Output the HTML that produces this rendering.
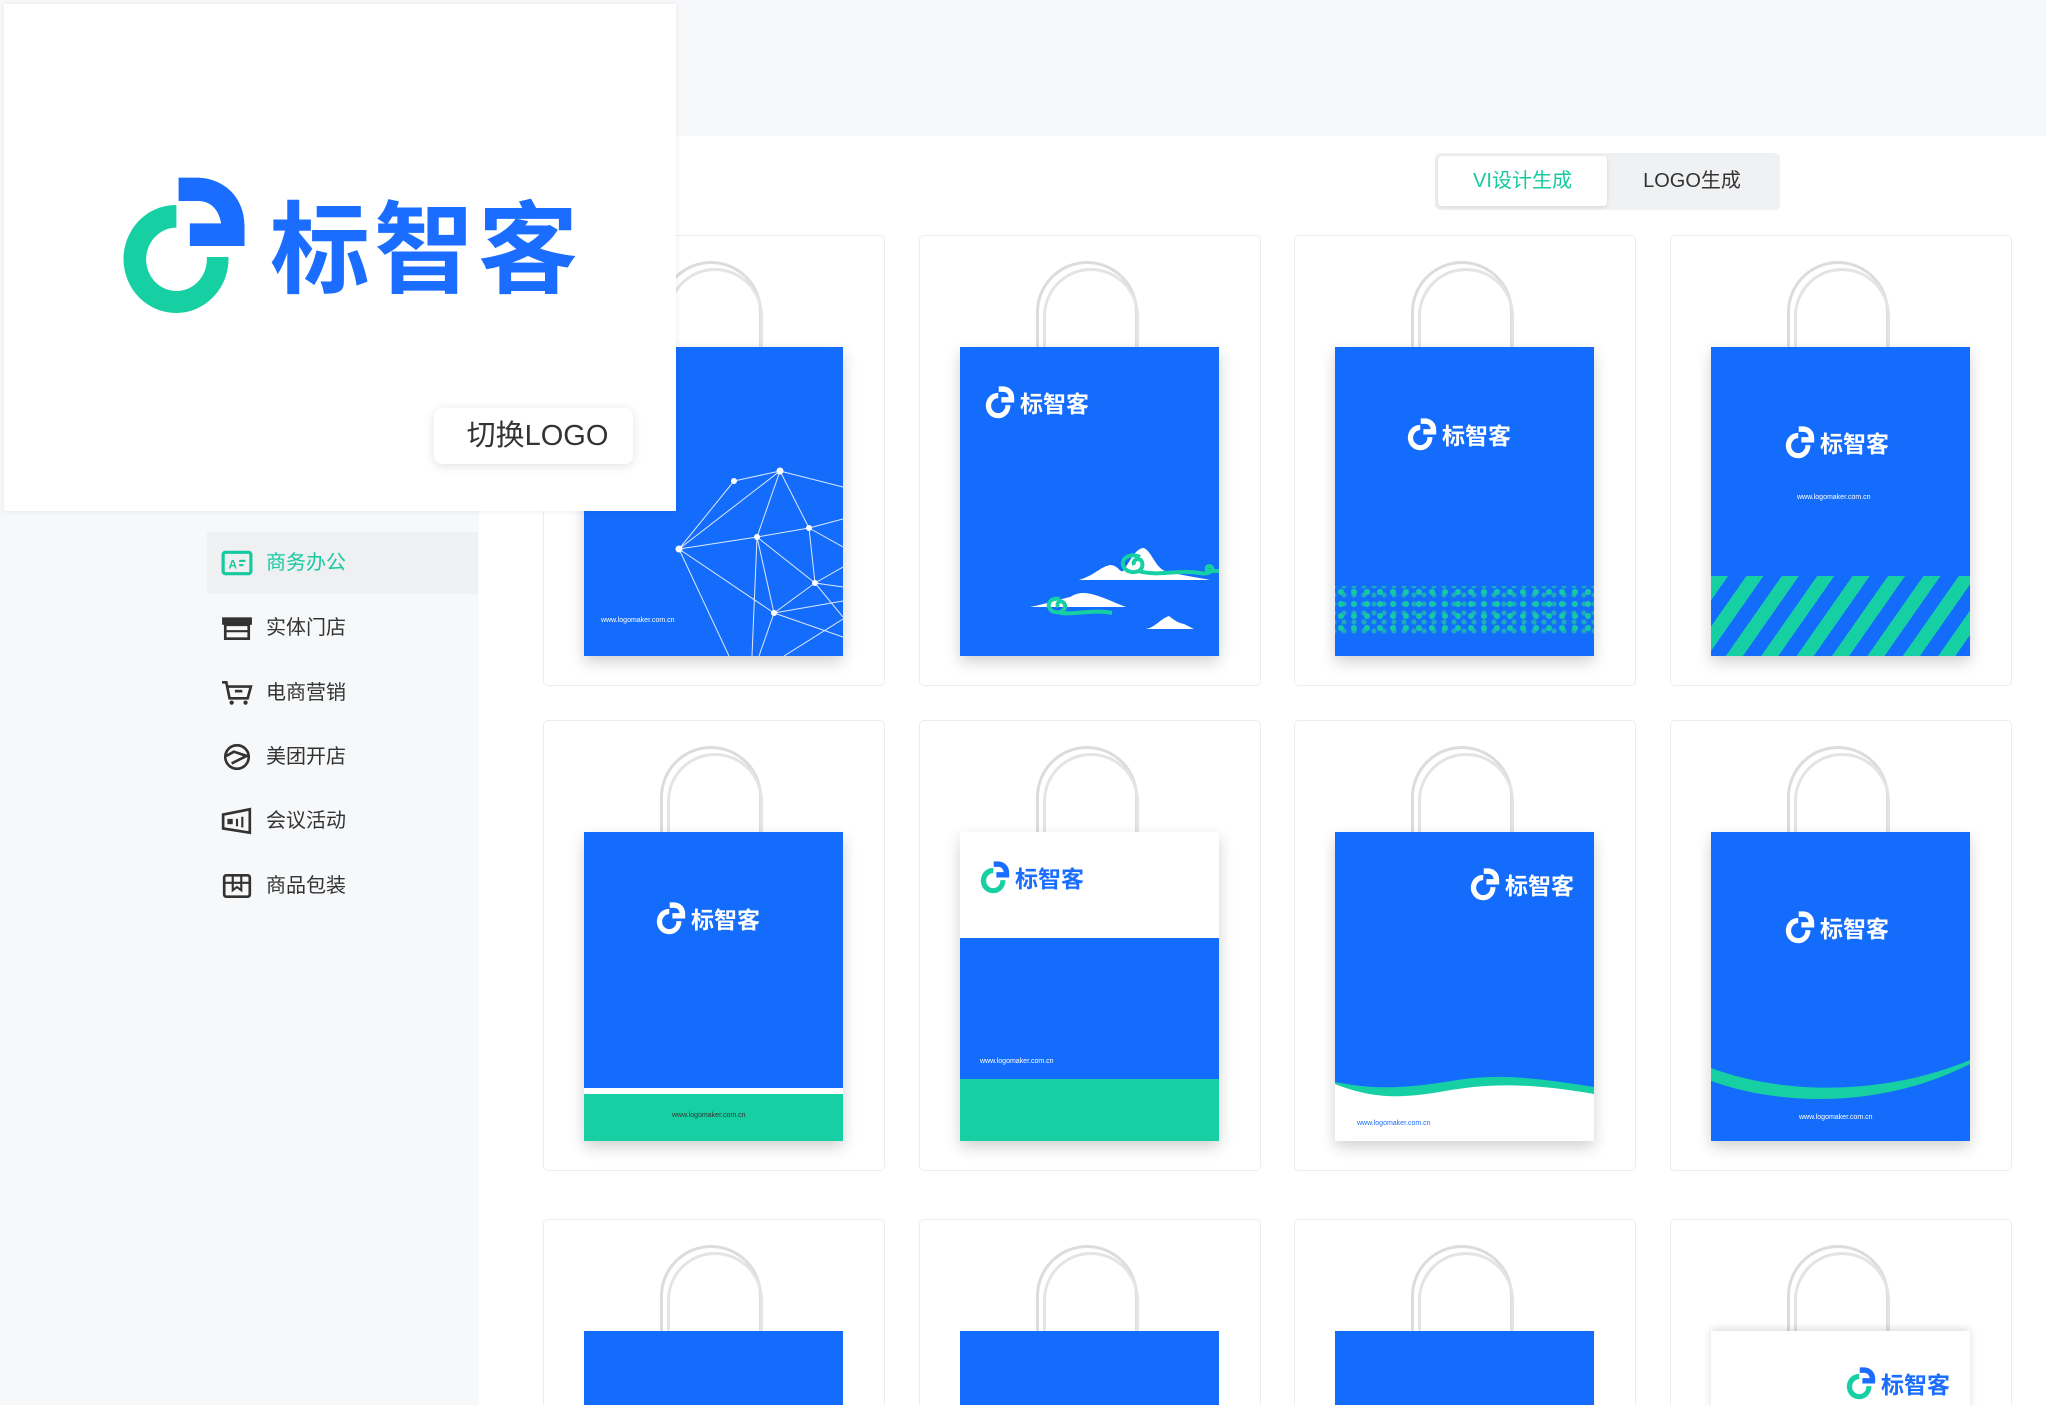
<!DOCTYPE html>
<html><head><meta charset="utf-8">
<style>
*{margin:0;padding:0;box-sizing:border-box}
html,body{width:2046px;height:1405px;overflow:hidden}
body{position:relative;background:#fff;font-family:"Liberation Sans","Noto Sans CJK SC",sans-serif}
.top{position:absolute;left:0;top:0;width:2046px;height:136px;background:#f7f8fa}
.side{position:absolute;left:0;top:136px;width:479px;height:1269px;background:#f7f8fa}
.logocard{position:absolute;left:4px;top:4px;width:672px;height:507px;background:#fff;box-shadow:0 0 6px rgba(0,0,0,.08);z-index:5}
.bigmark{position:absolute;left:116px;top:172px;width:128px;height:140px}
.bigtxt{position:absolute;left:266px;top:178px;font-size:100px;font-weight:bold;color:#1a6dff;letter-spacing:4px;line-height:120px;font-family:"Noto Sans CJK SC",sans-serif}
.switch{position:absolute;left:430px;top:404px;width:199px;height:56px;background:#fff;border-radius:8px;box-shadow:0 2px 10px rgba(0,0,0,.12);font-size:29px;color:#333;line-height:56px;text-align:center;padding-left:8px}
.item{position:absolute;left:207px;width:271px;height:62px;font-size:20px;color:#333;line-height:62px}
.item.act{background:#eff0f2;color:#16c9a0}
.item svg{position:absolute;left:14px;top:17px;width:32px;height:28px}
.item span{position:absolute;left:59px;top:0}
.tabs{position:absolute;left:1435px;top:153px;width:345px;height:57px;background:#f0f1f3;border-radius:5px}
.tab1{position:absolute;left:3px;top:3px;width:169px;height:50px;background:#fff;border-radius:4px;box-shadow:0 1px 4px rgba(0,0,0,.12);color:#16c9a0;font-size:20px;line-height:50px;text-align:center}
.tab2{position:absolute;left:172px;top:3px;width:170px;height:50px;color:#333;font-size:20px;line-height:50px;text-align:center}
.card{position:absolute;width:342px;height:451px;border:1px solid #ebedf0;border-radius:5px;background:#fff;overflow:hidden}
.card.r3{height:186px;border-bottom:none;border-radius:5px 5px 0 0}
.card.r3 .bag{height:75px;box-shadow:none}
.card.r3 .bag.wh{box-shadow:0 -2px 8px rgba(0,0,0,.14);height:80px}
.h1,.h2{position:absolute;border:3px solid #dcdcdc;border-bottom:none;border-radius:52px 52px 0 0}
.h1{left:116px;top:25px;width:102px;height:90px}
.h2{left:123px;top:32px;width:96px;height:83px;border-color:#e4e4e4}
.bag{position:absolute;left:40px;top:111px;width:259px;height:309px;background:#146cfc;box-shadow:0 6px 14px rgba(0,0,0,.18);overflow:hidden}
.lg{position:absolute;display:flex;align-items:center;height:34px;color:#fff;font-weight:bold;font-size:23px;font-family:"Noto Sans CJK SC",sans-serif;white-space:nowrap}
.lg svg{width:30px;height:33px;margin-right:5px}
.url{position:absolute;font-size:7px;color:#fff;white-space:nowrap}
</style></head><body>
<svg width="0" height="0" style="position:absolute">
<defs>
<symbol id="mk" viewBox="260 520 295 420" preserveAspectRatio="none">
<path fill="var(--g,#16cfa3)" d="M390 607 A121 162 0 1 0 510 763 L460 763 A70 95 0 1 1 390 675 Z"/>
<path fill="var(--b,#1a6dff)" d="M395 525 L435 525 C500 525 547 585 547 670 L547 730 L421 730 L421 662 L493 662 C488 620 468 595 440 595 L395 595 Z"/>
</symbol>
</defs>
</svg>

<div class="top"></div>
<div class="side"></div>

<div class="logocard">
<svg class="bigmark" preserveAspectRatio="none"><use href="#mk" width="128" height="140"/></svg>
<div class="bigtxt">标智客</div>
<div class="switch">切换LOGO</div>
</div>

<div class="item act" style="top:532px"><svg viewBox="0 0 30 26"><rect x="2" y="3" width="26" height="20" rx="2" fill="none" stroke="#16c9a0" stroke-width="3"/><text x="7" y="18" font-size="11" font-weight="bold" fill="#16c9a0" font-family="Liberation Sans">A</text><rect x="17" y="10" width="6" height="2" fill="#16c9a0"/><rect x="17" y="14" width="4" height="2" fill="#16c9a0"/></svg><span>商务办公</span></div>
<div class="item" style="top:597px"><svg viewBox="0 0 30 26"><rect x="1" y="3" width="28" height="7" fill="#333"/><rect x="4" y="10" width="22" height="13" fill="none" stroke="#333" stroke-width="2.5"/><line x1="4" y1="16" x2="26" y2="16" stroke="#333" stroke-width="2"/></svg><span>实体门店</span></div>
<div class="item" style="top:662px"><svg viewBox="0 0 30 26"><path d="M1 3 L5 3 L8 18 L25 18 L28 7 L6 7" fill="none" stroke="#333" stroke-width="2.5"/><rect x="13" y="10" width="7" height="2.5" fill="#333"/><circle cx="10" cy="22" r="2" fill="#333"/><circle cx="23" cy="22" r="2" fill="#333"/></svg><span>电商营销</span></div>
<div class="item" style="top:726px"><svg viewBox="0 0 30 26"><circle cx="15" cy="13" r="11" fill="none" stroke="#333" stroke-width="2.5"/><path d="M5 12 L12 8 L24 12 L10 19" fill="none" stroke="#333" stroke-width="2.5"/></svg><span>美团开店</span></div>
<div class="item" style="top:790px"><svg viewBox="0 0 30 26"><path d="M2 7 L27 2 L27 24 L2 20 Z" fill="none" stroke="#333" stroke-width="2.5"/><rect x="6" y="11" width="5" height="5" fill="#333"/><rect x="14" y="11" width="2" height="7" fill="#333"/><rect x="19" y="9" width="2" height="10" fill="#333"/></svg><span>会议活动</span></div>
<div class="item" style="top:855px"><svg viewBox="0 0 30 26"><rect x="3" y="3" width="24" height="20" rx="2" fill="none" stroke="#333" stroke-width="2.5"/><line x1="3" y1="10" x2="27" y2="10" stroke="#333" stroke-width="2"/><path d="M11 3 L11 17 L15 14 L19 17 L19 3" fill="none" stroke="#333" stroke-width="2"/></svg><span>商品包装</span></div>

<div class="tabs"><div class="tab1">VI设计生成</div><div class="tab2">LOGO生成</div></div>

<!-- Row 1 -->
<div class="card" style="left:543px;top:235px"><div class="h1"></div><div class="h2"></div>
<div class="bag">
<svg width="259" height="309" style="position:absolute;left:0;top:0" stroke="#fff" stroke-width="1" fill="#fff">
<g fill="none" stroke-opacity=".85">
<path d="M150 134 L196 124 L259 140 M150 134 L95 202 M196 124 L95 202 M196 124 L173 190 M196 124 L225 181 M95 202 L173 190 L225 181 L259 172 M225 181 L259 200 M225 181 L231 236 M173 190 L231 236 L259 240 M173 190 L190 266 M95 202 L190 266 M95 202 L145 309 M190 266 L231 236 L259 220 M190 266 L259 254 M190 266 L175 309 M173 190 L168 309 M190 266 L259 290 M231 236 L259 270 M200 309 L259 272"/>
</g>
<circle cx="196" cy="124" r="3"/><circle cx="150" cy="134" r="2.5"/><circle cx="95" cy="202" r="3"/><circle cx="173" cy="190" r="2.5"/><circle cx="225" cy="181" r="2.5"/><circle cx="231" cy="236" r="2.5"/><circle cx="190" cy="266" r="2.5"/>
</svg>
<div class="url" style="left:17px;top:270px">www.logomaker.com.cn</div>
</div></div>

<div class="card" style="left:919px;top:235px"><div class="h1"></div><div class="h2"></div>
<div class="bag" style="--g:#fff;--b:#fff">
<div class="lg" style="left:25px;top:38px"><svg><use href="#mk" width="30" height="33"/></svg>标智客</div>
<svg width="259" height="309" style="position:absolute;left:0;top:0">
<path fill="#fff" d="M119 233 C135 228 140 220 150 218 C158 218 160 226 163 224 C170 215 175 201 184 201 C192 205 195 220 205 224 C220 228 235 230 250 233 Z"/>
<path fill="#fff" d="M70 260 C90 256 100 252 110 250 C118 245 125 245 135 248 C148 252 155 256 166 260 Z"/>
<path fill="#fff" d="M186 282 C196 280 200 272 209 269 C214 273 218 276 224 277 C228 279 232 281 234 282 Z"/>
<path fill="none" stroke="#16cfa3" stroke-width="4" d="M180 210 C170 205 158 212 165 222 C172 228 185 225 182 215 C180 210 172 212 174 218 M178 224 C200 230 215 222 240 226 C250 228 256 222 250 219 C245 219 246 224 250 224 L259 224"/>
<path fill="none" stroke="#16cfa3" stroke-width="4" d="M100 252 C90 250 85 258 92 264 C100 268 108 262 104 256 C100 252 96 256 98 260 M100 266 C115 268 135 262 152 266"/>
</svg>
</div></div>

<div class="card" style="left:1294px;top:235px"><div class="h1"></div><div class="h2"></div>
<div class="bag" style="--g:#fff;--b:#fff">
<div class="lg" style="left:72px;top:70px"><svg><use href="#mk" width="30" height="33"/></svg>标智客</div>
<div style="position:absolute;left:0;top:239px;width:259px;height:49px;background:radial-gradient(circle at 6px 6px,#16cfa3 2.5px,transparent 3.5px) 0 0/13px 12px,radial-gradient(circle at 3px 3px,#1fb0b8 2px,transparent 3px) 6px 6px/10px 9px;opacity:.95"></div>
</div></div>

<div class="card" style="left:1670px;top:235px"><div class="h1"></div><div class="h2"></div>
<div class="bag" style="--g:#fff;--b:#fff">
<div class="lg" style="left:74px;top:78px"><svg><use href="#mk" width="30" height="33"/></svg>标智客</div>
<div class="url" style="left:86px;top:147px">www.logomaker.com.cn</div>
<div style="position:absolute;left:0;top:229px;width:259px;height:80px;background:repeating-linear-gradient(125deg,#16cfa3 0 14px,#146cfc 14px 29px)"></div>
</div></div>

<!-- Row 2 -->
<div class="card" style="left:543px;top:720px"><div class="h1"></div><div class="h2"></div>
<div class="bag" style="--g:#fff;--b:#fff">
<div class="lg" style="left:72px;top:69px"><svg><use href="#mk" width="30" height="33"/></svg>标智客</div>
<div style="position:absolute;left:0;top:256px;width:259px;height:6px;background:#fff"></div>
<div style="position:absolute;left:0;top:262px;width:259px;height:47px;background:#16cfa3"></div>
<div class="url" style="left:88px;top:280px;color:#333">www.logomaker.com.cn</div>
</div></div>

<div class="card" style="left:919px;top:720px"><div class="h1"></div><div class="h2"></div>
<div class="bag">
<div style="position:absolute;left:0;top:0;width:259px;height:106px;background:#fff"></div>
<div class="lg" style="left:20px;top:28px;color:#1a6dff"><svg><use href="#mk" width="30" height="33"/></svg>标智客</div>
<div class="url" style="left:20px;top:226px">www.logomaker.com.cn</div>
<div style="position:absolute;left:0;top:247px;width:259px;height:62px;background:#16cfa3"></div>
</div></div>

<div class="card" style="left:1294px;top:720px"><div class="h1"></div><div class="h2"></div>
<div class="bag" style="--g:#fff;--b:#fff">
<div class="lg" style="left:135px;top:35px"><svg><use href="#mk" width="30" height="33"/></svg>标智客</div>
<svg width="259" height="309" style="position:absolute;left:0;top:0">
<path fill="#16cfa3" d="M0 250 C40 258 70 256 110 250 C150 243 180 242 259 255 L259 309 L0 309 Z"/>
<path fill="#fff" d="M0 252 C40 268 70 266 110 259 C150 252 190 250 259 262 L259 309 L0 309 Z"/>
</svg>
<div class="url" style="left:22px;top:288px;color:#1a6dff">www.logomaker.com.cn</div>
</div></div>

<div class="card" style="left:1670px;top:720px"><div class="h1"></div><div class="h2"></div>
<div class="bag" style="--g:#fff;--b:#fff">
<div class="lg" style="left:74px;top:78px"><svg><use href="#mk" width="30" height="33"/></svg>标智客</div>
<svg width="259" height="309" style="position:absolute;left:0;top:0">
<path fill="#16cfa3" d="M0 236 C70 262 170 265 259 228 L259 232 C170 277 70 274 0 249 Z"/>
</svg>
<div class="url" style="left:88px;top:282px">www.logomaker.com.cn</div>
</div></div>

<!-- Row 3 -->
<div class="card r3" style="left:543px;top:1219px"><div class="h1"></div><div class="h2"></div><div class="bag"></div></div>
<div class="card r3" style="left:919px;top:1219px"><div class="h1"></div><div class="h2"></div><div class="bag"></div></div>
<div class="card r3" style="left:1294px;top:1219px"><div class="h1"></div><div class="h2"></div><div class="bag"></div></div>
<div class="card r3" style="left:1670px;top:1219px"><div class="h1"></div><div class="h2"></div>
<div class="bag wh" style="background:#fff"><div class="lg" style="left:135px;top:35px;color:#1a6dff"><svg><use href="#mk" width="30" height="33"/></svg>标智客</div></div></div>

</body></html>
